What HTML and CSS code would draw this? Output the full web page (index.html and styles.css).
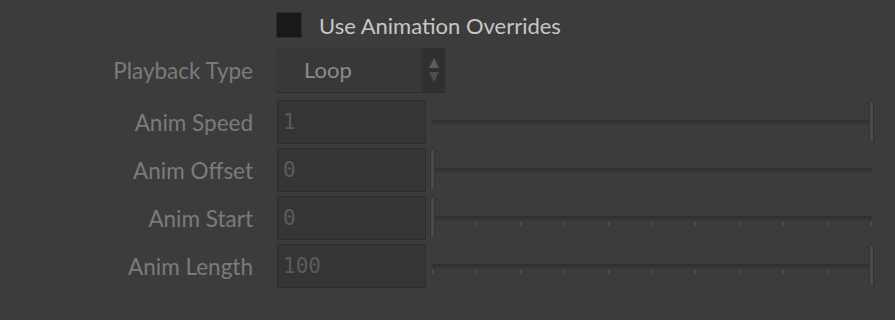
FILE: index.html
```html
<!DOCTYPE html>
<html lang="en">
  <head>
    <meta charset="UTF-8" />
    <title>Animation Overrides</title>
    <link rel="stylesheet" href="styles.css">
  </head>
  <body>
    <div class="panel">
      <div class="row toggle-row">
        <span class="label"></span>
        <span class="checkbox"></span>
        <span class="toggle-text">Use Animation Overrides</span>
      </div>
      <div class="row menu-row">
        <span class="label">Playback Type</span>
        <div class="menu">
          <span class="menu-value">Loop</span>
          <span class="menu-arrows">
            <svg width="12" height="26" viewBox="0 0 12 26">
              <path d="M6 1 L11 11 L1 11 Z" fill="#5c5c5c" />
              <path d="M1 15 L11 15 L6 25 Z" fill="#4e4e4e" />
            </svg>
          </span>
        </div>
      </div>
      <div class="row field-row">
        <span class="label">Anim Speed</span>
        <div class="field">1</div>
        <div class="slider">
          <div class="track"></div>
          <div class="handle at-max"></div>
        </div>
      </div>
      <div class="row field-row">
        <span class="label">Anim Offset</span>
        <div class="field">0</div>
        <div class="slider">
          <div class="track"></div>
          <div class="handle at-min"></div>
        </div>
      </div>
      <div class="row field-row">
        <span class="label">Anim Start</span>
        <div class="field">0</div>
        <div class="slider">
          <div class="track"></div>
          <div class="ticks">
            <i></i><i></i><i></i><i></i><i></i><i></i><i></i><i></i><i></i><i></i><i></i>
          </div>
          <div class="handle at-min"></div>
        </div>
      </div>
      <div class="row field-row">
        <span class="label">Anim Length</span>
        <div class="field">100</div>
        <div class="slider">
          <div class="track"></div>
          <div class="ticks">
            <i></i><i></i><i></i><i></i><i></i><i></i><i></i><i></i><i></i><i></i><i></i>
          </div>
          <div class="handle at-max"></div>
        </div>
      </div>
    </div>
  </body>
</html>
```
FILE: styles.css
```css
body {
  margin: 0;
  padding: 0;
  background: #3c3c3c;
  font-family: Lato, "Open Sans", sans-serif;
}
.panel {
  display: flex;
  flex-direction: column;
  gap: 4px;
  padding-top: 12px;
}
.row {
  display: flex;
  align-items: center;
}
.label {
  width: 253px;
  flex: none;
  text-align: right;
  color: #7b7b7b;
  font-size: 22.5px;
  margin-right: 24px;
}
.toggle-row {
  height: 26px;
  margin-bottom: 6px;
}
.checkbox {
  width: 24px;
  height: 24px;
  margin-left: -1px;
  background: #191919;
  border: 1px solid #2c2c2c;
  flex: none;
}
.toggle-text {
  margin-left: 17px;
  color: #c6c6c6;
  font-size: 22px;
}
.menu-row {
  height: 45px;
  margin-bottom: 3px;
}
.menu {
  display: flex;
  width: 169px;
  height: 45px;
  margin-left: -1px;
  background: #383838;
  border-bottom: 1px solid #2c2c2c;
  box-sizing: border-box;
  box-shadow: inset 1px 1px 0 #353535;
}
.menu-value {
  flex: 1;
  padding-left: 28px;
  line-height: 44px;
  color: #8c8c8c;
  font-size: 22px;
}
.menu-arrows {
  width: 23px;
  background: #303030;
  display: flex;
  align-items: center;
  justify-content: center;
}
.field-row {
  height: 44px;
}
.field {
  width: 149px;
  height: 44px;
  box-sizing: border-box;
  flex: none;
  background: #353535;
  border: 1px solid #2e2e2e;
  padding-left: 5px;
  line-height: 42px;
  font-family: "DejaVu Sans Mono", monospace;
  font-size: 21px;
  color: #5b5b5b;
}
.slider {
  position: relative;
  width: 446px;
  height: 44px;
  margin-left: 4px;
}
.track {
  position: absolute;
  left: 2px;
  right: 4px;
  top: 20px;
  height: 4px;
  background: #333333;
  border-top: 1px solid #2f2f2f;
  border-radius: 2px;
  box-sizing: border-box;
}
.ticks {
  position: absolute;
  left: 2px;
  right: 4px;
  top: 26px;
  display: flex;
  justify-content: space-between;
}
.ticks i {
  width: 1px;
  height: 4px;
  background: #555555;
}
.handle {
  position: absolute;
  top: 1px;
  width: 5px;
  height: 41px;
  box-sizing: border-box;
  background: #4b4b4b;
  border: 1px solid #333333;
  border-radius: 1px;
}
.at-min {
  left: 0;
}
.at-max {
  left: 439px;
}
```
